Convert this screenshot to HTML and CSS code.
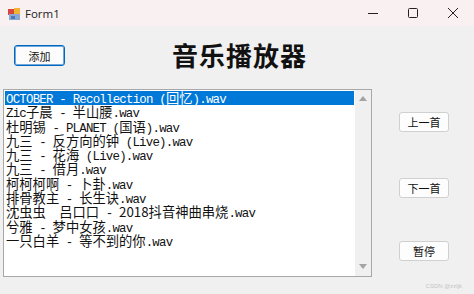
FILE: index.html
```html
<html>
<head><title>Form1</title>
<meta charset="utf-8">
<link rel="stylesheet" href="styles.css">
</head>
<body>
<div id="win">
	<div class="titlebar">
		<svg class="appicon" width="12" height="12" viewBox="0 0 12 12">
			<rect x="0" y="1" width="6" height="6" fill="#d9463b"/>
			<rect x="6" y="0" width="6" height="6" fill="#f2b233"/>
			<rect x="1" y="6" width="11" height="6" fill="#8aa8d0"/>
			<rect x="3" y="8" width="4" height="3" fill="#4a78b8"/>
		</svg>
		<span class="caption">Form1</span>
		<div class="spacer"></div>
		<div class="ctl">
			<svg width="12" height="12" viewBox="0 0 12 12"><line x1="1" y1="6.5" x2="11" y2="6.5" stroke="#222" stroke-width="1"/></svg>
		</div>
		<div class="ctl">
			<svg width="12" height="12" viewBox="0 0 12 12"><rect x="1.5" y="1.5" width="9" height="9" rx="1" fill="none" stroke="#222" stroke-width="1"/></svg>
		</div>
		<div class="ctl">
			<svg width="12" height="12" viewBox="0 0 12 12"><path d="M1 1 L11 11 M11 1 L1 11" stroke="#222" stroke-width="1"/></svg>
		</div>
	</div>
	<div class="client">
		<div class="top">
			<button class="btn add">添加</button>
			<h1 class="heading">音乐播放器</h1>
		</div>
		<div class="main">
			<div class="listbox">
				<div class="items">
					<div class="row sel">OCTOBER - Recollection (<span class="z">回忆</span>).wav</div>
					<div class="row">Zic<span class="z">子晨</span> - <span class="z">半山腰</span>.wav</div>
					<div class="row"><span class="z">杜明锡</span> - PLANET (<span class="z">国语</span>).wav</div>
					<div class="row"><span class="z">九三</span> - <span class="z">反方向的钟</span> (Live).wav</div>
					<div class="row"><span class="z">九三</span> - <span class="z">花海</span> (Live).wav</div>
					<div class="row"><span class="z">九三</span> - <span class="z">借月</span>.wav</div>
					<div class="row"><span class="z">柯柯柯啊</span> - <span class="z">卜卦</span>.wav</div>
					<div class="row"><span class="z">排骨教主</span> - <span class="z">长生诀</span>.wav</div>
					<div class="row"><span class="z">沈虫虫　吕口口</span> - <span class="z">2018抖音神曲串烧</span>.wav</div>
					<div class="row"><span class="z">兮雅</span> - <span class="z">梦中女孩</span>.wav</div>
					<div class="row"><span class="z">一只白羊</span> - <span class="z">等不到的你</span>.wav</div>
				</div>
				<div class="scroll">
					<div class="arrow up"></div>
					<div class="arrow down"></div>
				</div>
			</div>
			<div class="side">
				<button class="btn nav prev">上一首</button>
				<button class="btn nav next">下一首</button>
				<button class="btn nav pause">暂停</button>
			</div>
		</div>
	</div>
	<div class="mark">CSDN @zzljk</div>
</div>
</body>
</html>
```
FILE: styles.css
```css
body {margin: 0; overflow: hidden; font-family: "Noto Sans CJK SC", sans-serif;}
#win
{
	position: relative;
	width: 474px;
	height: 294px;
	background: #f0f0f0;
}
.titlebar
{
	display: flex;
	align-items: center;
	height: 26px;
	background: #f9f1f1;
}
.appicon
{
	margin-left: 8px;
	margin-top: 1px;
}
.caption
{
	margin-left: 5px;
	font-family: "Open Sans", sans-serif;
	font-size: 11.5px;
	color: #222;
}
.spacer {flex: 1;}
.ctl
{
	width: 40px;
	height: 26px;
	display: flex;
	align-items: center;
	justify-content: center;
}
.ctl:last-child {margin-right: 1px;}

.top
{
	display: flex;
	height: 63px;
	padding-left: 14px;
}
.btn
{
	font-family: "Noto Sans CJK SC", sans-serif;
	font-size: 11px;
	color: #111;
	background: #fdfdfd;
	border: 1px solid #d0d0d0;
	border-radius: 3px;
	padding: 0;
	line-height: 18px;
}
.add
{
	width: 51px;
	height: 21px;
	margin-top: 19px;
	border: 1px solid #0067c0;
	box-shadow: inset 0 0 0 1px #6fa8dc;
	background: #fcfcfc;
}
.heading
{
	margin: 14px 0 0 107px;
	font-size: 26px;
	line-height: 30px;
	font-weight: 600;
	color: #111;
	letter-spacing: 1px;
}

.main
{
	display: flex;
	padding-left: 3px;
}
.listbox
{
	display: flex;
	width: 367px;
	height: 186px;
	border: 1px solid #a8a8a8;
	background: #fff;
}
.items
{
	flex: 1;
	padding: 1px;
}
.row
{
	height: 14.3px;
	line-height: 14.3px;
	white-space: nowrap;
	font-family: "Liberation Mono", monospace;
	font-size: 12.4px;
	letter-spacing: -0.77px;
	color: #111;
	padding-left: 1px;
}
.z
{
	font-family: "Noto Sans CJK SC", sans-serif;
	font-size: 13.3px;
	line-height: 14.3px;
	letter-spacing: 0;
}
.sel
{
	background: #0078d7;
	color: #fff;
}
.scroll
{
	position: relative;
	width: 16px;
	background: #f0f0f0;
}
.arrow
{
	position: absolute;
	left: 4px;
	width: 0;
	height: 0;
	border-left: 4px solid transparent;
	border-right: 4px solid transparent;
}
.up
{
	top: 6px;
	border-bottom: 5px solid #a3a3a3;
}
.down
{
	bottom: 7px;
	border-top: 5px solid #a3a3a3;
}

.side
{
	display: flex;
	flex-direction: column;
	margin-left: 27px;
	padding-top: 23px;
}
.nav
{
	width: 50px;
	height: 20px;
}
.next {margin-top: 46px;}
.pause {margin-top: 43px;}

.mark
{
	position: absolute;
	right: 12px;
	bottom: 5px;
	font-family: "Liberation Sans", sans-serif;
	font-size: 6px;
	color: #c4c4c4;
}
```
